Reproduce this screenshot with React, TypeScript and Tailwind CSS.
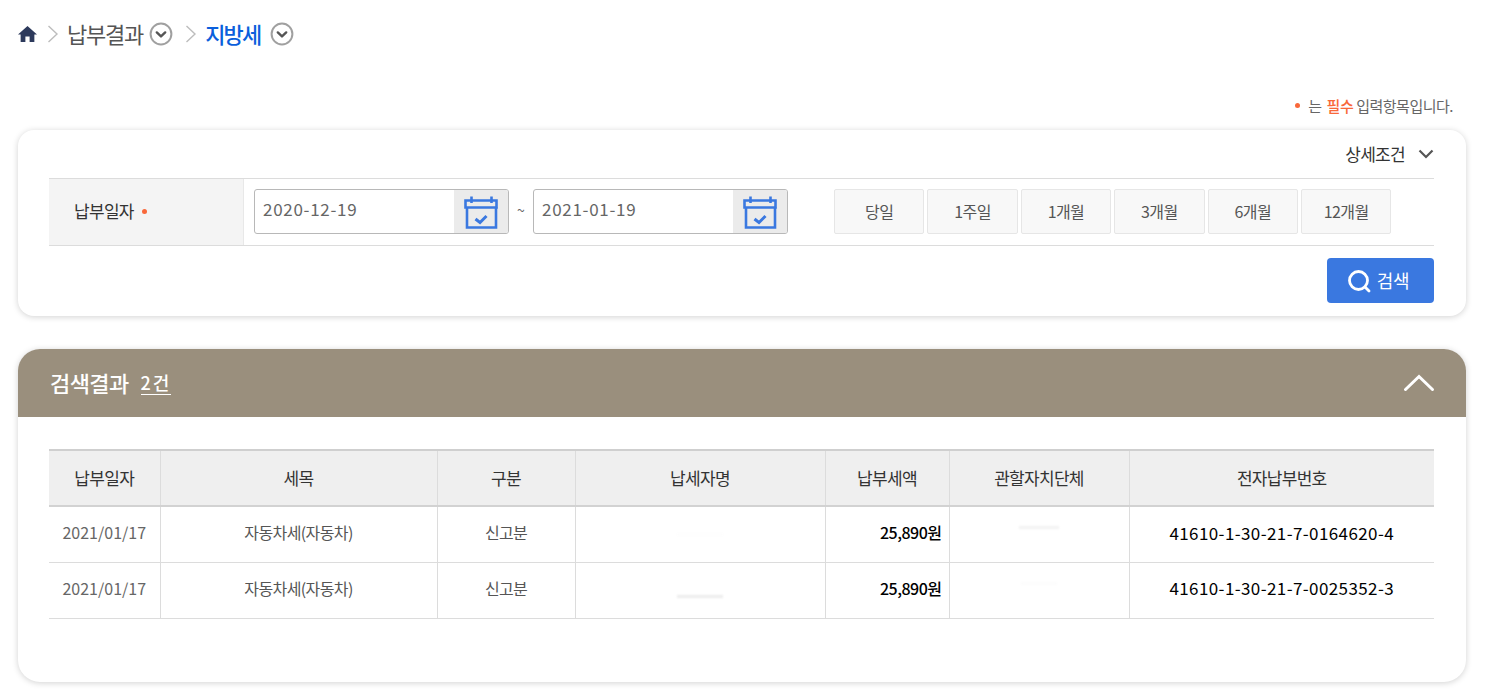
import React from "react";

const ranges = ["당일", "1주일", "1개월", "3개월", "6개월", "12개월"];

const columns = [
  { label: "납부일자", width: "w-[111px]" },
  { label: "세목", width: "w-[277px]" },
  { label: "구분", width: "w-[138px]" },
  { label: "납세자명", width: "w-[250px]" },
  { label: "납부세액", width: "w-[124px]" },
  { label: "관할자치단체", width: "w-[180px]" },
  { label: "전자납부번호", width: "w-[305px]" },
];

const rows = [
  { date: "2021/01/17", tax: "자동차세(자동차)", type: "신고분", amount: "25,890원", no: "41610-1-30-21-7-0164620-4" },
  { date: "2021/01/17", tax: "자동차세(자동차)", type: "신고분", amount: "25,890원", no: "41610-1-30-21-7-0025352-3" },
];

function CircleChevron() {
  return (
    <svg width="24" height="24" viewBox="0 0 24 24" fill="none">
      <circle cx="12" cy="12" r="10.4" stroke="#a0a0a0" strokeWidth="2" />
      <path d="M7.8 10.4 L12 14.4 L16.2 10.4" stroke="#555" strokeWidth="2.4" strokeLinecap="round" strokeLinejoin="round" />
    </svg>
  );
}

function Crumb() {
  return (
    <svg width="12" height="20" viewBox="0 0 12 20" fill="none">
      <path d="M1.5 2 L10 10 L1.5 18" stroke="#bdbdbd" strokeWidth="1.4" />
    </svg>
  );
}

function CalendarIcon() {
  return (
    <svg width="36" height="36" viewBox="0 0 36 36" fill="none">
      <path d="M2.500 6.500 H33.500 V13.500 H2.500 Z" stroke="#3a78e0" strokeWidth="2.600" />
      <path d="M4 13 V33.500 H33 V13" stroke="#3a78e0" strokeWidth="2.600" />
      <path d="M8.500 2.500 V9 M28.500 2.500 V9" stroke="#3a78e0" strokeWidth="2.600" />
      <path d="M12.500 25 L17 28.500 L23.500 22" stroke="#3a78e0" strokeWidth="3" />
    </svg>
  );
}

function DateField({ value }: { value: string }) {
  return (
    <div className="flex h-[45px] w-[255px] overflow-hidden rounded-[3px] border border-[#b8b8b8]">
      <div className="flex flex-1 items-center pb-[5px] pl-2 text-[17px] tracking-[0.7px] text-[#666]">{value}</div>
      <div className="flex w-[54px] items-center justify-center bg-[#ebebeb]">
        <CalendarIcon />
      </div>
    </div>
  );
}

// 가려진 글자 자리
function Smudge({ width, tone, lift }: { width: string; tone: string; lift: string }) {
  return <span className={`relative mx-auto block h-[3px] blur-[1px] ${width} ${tone} ${lift}`} />;
}

export default function App() {
  return (
    <div
      className="h-[691px] overflow-hidden bg-white pl-[18px] pr-[23px]"
      style={{ fontFamily: '"Noto Sans CJK KR", "Noto Sans", sans-serif' }}
    >
      <nav className="flex h-[68px] items-center">
        <svg width="19" height="18" viewBox="0 0 18 18" preserveAspectRatio="none">
          <path d="M9 1 L18 9.500 H15.500 V17 H11 V11.500 H7 V17 H2.500 V9.500 H0 Z" fill="#2d3a5c" />
        </svg>
        <span className="ml-[10px]"><Crumb /></span>
        <span className="ml-[8px] pb-[1px] text-[22px] tracking-[-1.2px] text-[#555]">납부결과</span>
        <span className="ml-[6px]"><CircleChevron /></span>
        <span className="ml-[12px]"><Crumb /></span>
        <span className="ml-[8px] pb-[1px] text-[22px] font-medium tracking-[-1.8px] text-[#0b5fdc]">지방세</span>
        <span className="ml-[9px]"><CircleChevron /></span>
      </nav>

      <div className="flex h-[62px] items-end justify-end pb-[14px] pr-[13px] text-[15px] leading-[20px] tracking-[-0.5px] text-[#666]">
        <span className="mb-[8px] mr-[8px] h-[5px] w-[5px] rounded-full bg-[#f9683a]" />
        <span>는</span>
        <span className="ml-[5px] font-medium text-[#f9683a]">필수</span>
        <span className="ml-[3px]">입력항목입니다.</span>
      </div>

      <section className="h-[186px] rounded-[16px] bg-white pl-[31px] pr-[32px] shadow-[0_1px_6px_rgba(0,0,0,0.18)]">
        <div className="flex h-[48px] items-center justify-end">
          <span className="text-[17px] tracking-[-0.7px] text-[#333]">상세조건</span>
          <svg width="16" height="10" viewBox="0 0 16 10" fill="none" className="ml-[13px]">
            <path d="M1.500 1.500 L8 8 L14.500 1.500" stroke="#555" strokeWidth="2.200" />
          </svg>
        </div>
        <div className="flex h-[68px] border-y border-[#dcdcdc]">
          <div className="flex w-[195px] items-center border-r border-[#e8e8e8] bg-[#f4f4f4] pb-[2px] pl-[25px] text-[17px] tracking-[-0.7px] text-[#333]">
            납부일자
            <span className="ml-[8px] h-[5px] w-[5px] rounded-full bg-[#f9683a]" />
          </div>
          <div className="flex items-start pl-[10px] pt-[10px]">
            <DateField value="2020-12-19" />
            <span className="w-[24px] pt-[11px] text-center text-[14px] text-[#666]">~</span>
            <DateField value="2021-01-19" />
            <div className="ml-[46px] flex gap-[3px]">
              {ranges.map((r) => (
                <div
                  key={r}
                  className="flex h-[45px] w-[90.400px] items-center justify-center rounded-[2px] border border-[#e6e6e6] bg-[#f8f8f8] pb-[2px] text-[16px] tracking-[-0.6px] text-[#555]"
                >
                  {r}
                </div>
              ))}
            </div>
          </div>
        </div>
        <div className="flex justify-end pt-[12px]">
          <button className="flex h-[45px] w-[107px] items-center justify-center rounded-[4px] bg-[#3a78e0] pr-[5px] text-[18px] tracking-[-0.3px] text-white">
            <svg width="24" height="24" viewBox="0 0 24 24" fill="none" className="mr-[6px]">
              <circle cx="11.500" cy="11.500" r="9" stroke="white" strokeWidth="2.800" />
              <path d="M18.500 18.500 L22 22" stroke="white" strokeWidth="2.800" strokeLinecap="round" />
            </svg>
            검색
          </button>
        </div>
      </section>

      <section className="mt-[33px] h-[333px] overflow-hidden rounded-[22px] bg-white shadow-[0_1px_6px_rgba(0,0,0,0.18)]">
        <div className="flex h-[68px] items-center justify-between bg-[#9a8f7d] pl-[32px] pr-[31px] text-white">
          <div className="flex items-center pb-[1px]">
            <span className="text-[22px] font-medium tracking-[-0.6px]">검색결과</span>
            <span className="ml-[12px] border-b-[1.500px] border-white text-[18px] leading-[23px] font-medium tracking-[2px]">2건</span>
          </div>
          <svg width="32" height="18" viewBox="0 0 32 18" fill="none">
            <path d="M2.500 15.500 L16 2.500 L29.500 15.500" stroke="white" strokeWidth="3" strokeLinecap="round" />
          </svg>
        </div>

        <div className="px-[31px] pt-[32px]">
          <table className="w-[1385px] table-fixed border-collapse text-center">
            <colgroup>
              {columns.map((c) => (
                <col key={c.label} className={c.width} />
              ))}
            </colgroup>
            <thead>
              <tr className="h-[56px] border-y-2 border-t-[#cfcfcf] border-b-[#d2d2d2] bg-[#efefef]">
                {columns.map((c, i) => (
                  <th
                    key={c.label}
                    className={`pb-[1px] text-[17px] font-normal tracking-[-0.7px] text-[#333] ${i > 0 ? "border-l border-[#dcdcdc]" : ""}`}
                  >
                    {c.label}
                  </th>
                ))}
              </tr>
            </thead>
            <tbody>
              {rows.map((row, i) => (
                <tr key={row.no} className="h-[56px] border-b border-[#dcdcdc] text-[16px]">
                  <td className="pb-[4px] tracking-[0px] text-[#666]">{row.date}</td>
                  <td className="border-l border-[#dcdcdc] pb-[4px] tracking-[-0.6px] text-[#555]">{row.tax}</td>
                  <td className="border-l border-[#dcdcdc] pb-[4px] tracking-[-0.8px] text-[#555]">{row.type}</td>
                  <td className="border-l border-[#dcdcdc]">
                    {i === 0 ? (
                      <Smudge width="w-[46px]" tone="bg-[#fdfdfd]" lift="top-[0px]" />
                    ) : (
                      <Smudge width="w-[46px]" tone="bg-[#ececec]" lift="top-[6px]" />
                    )}
                  </td>
                  <td className="border-l border-[#dcdcdc] pb-[4px] pr-[7px] text-right font-medium tracking-[-0.5px] text-black">{row.amount}</td>
                  <td className="border-l border-[#dcdcdc]">
                    {i === 0 ? (
                      <Smudge width="w-[40px]" tone="bg-[#f2f2f2]" lift="top-[-7px]" />
                    ) : (
                      <Smudge width="w-[36px]" tone="bg-[#fcfcfc]" lift="top-[-7px]" />
                    )}
                  </td>
                  <td className="border-l border-[#dcdcdc] pb-[4px] text-[17px] tracking-[0.4px] text-black">{row.no}</td>
                </tr>
              ))}
            </tbody>
          </table>
        </div>
      </section>
    </div>
  );
}
